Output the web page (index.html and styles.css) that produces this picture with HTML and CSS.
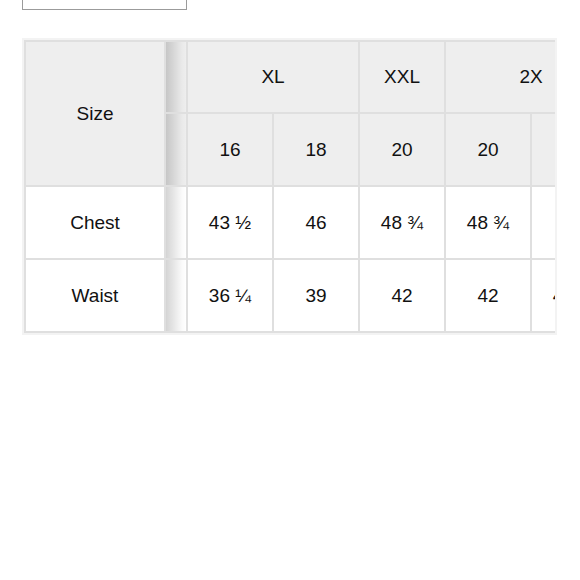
FILE: index.html
```html
<!DOCTYPE html>
<html>
<head>
<meta charset="utf-8">
<link rel="stylesheet" href="styles.css">
</head>
<body>
<div class="topbox"></div>
<div class="frame">
  <div class="grid">
    <div class="cell head sticky span-rows">Size</div>
    <div class="cell head strip"></div>
    <div class="cell head span-2">XL</div>
    <div class="cell head">XXL</div>
    <div class="cell head span-2">2X</div>

    <div class="cell head strip"></div>
    <div class="cell head">16</div>
    <div class="cell head">18</div>
    <div class="cell head">20</div>
    <div class="cell head">20</div>
    <div class="cell head"></div>

    <div class="cell sticky">Chest</div>
    <div class="cell strip"></div>
    <div class="cell">43 ½</div>
    <div class="cell">46</div>
    <div class="cell">48 ¾</div>
    <div class="cell">48 ¾</div>
    <div class="cell">50</div>

    <div class="cell sticky">Waist</div>
    <div class="cell strip"></div>
    <div class="cell">36 ¼</div>
    <div class="cell">39</div>
    <div class="cell">42</div>
    <div class="cell">42</div>
    <div class="cell">44 ½</div>
  </div>
</div>
</body>
</html>
```

FILE: styles.css
```css
body {
  margin: 0;
  background: #ffffff;
  font-family: "Liberation Sans", Arial, sans-serif;
  color: #111111;
}

.topbox {
  margin-left: 22px;
  width: 163px;
  height: 9px;
  border: 1px solid #9b9b9b;
  border-top: 0;
}

.frame {
  margin: 28px 0 0 22px;
  width: 531px;
  border: 2px solid #f3f3f3;
  overflow: hidden;
}

.grid {
  display: grid;
  grid-template-columns: 138px 20px repeat(5, 84px);
  grid-template-rows: 70px 71px 71px 71px;
  gap: 2px;
  padding: 2px;
  background: #dfdfdf;
  width: max-content;
}

.cell {
  display: flex;
  align-items: center;
  justify-content: center;
  background: #ffffff;
  font-size: 19px;
  white-space: nowrap;
}

.head {
  background: #eeeeee;
}

.span-rows {
  grid-row: span 2;
}

.span-2 {
  grid-column: span 2;
}

.strip {
  background-image: linear-gradient(to right, rgba(0, 0, 0, 0.17), rgba(0, 0, 0, 0.02) 80%, rgba(0, 0, 0, 0));
}
```
